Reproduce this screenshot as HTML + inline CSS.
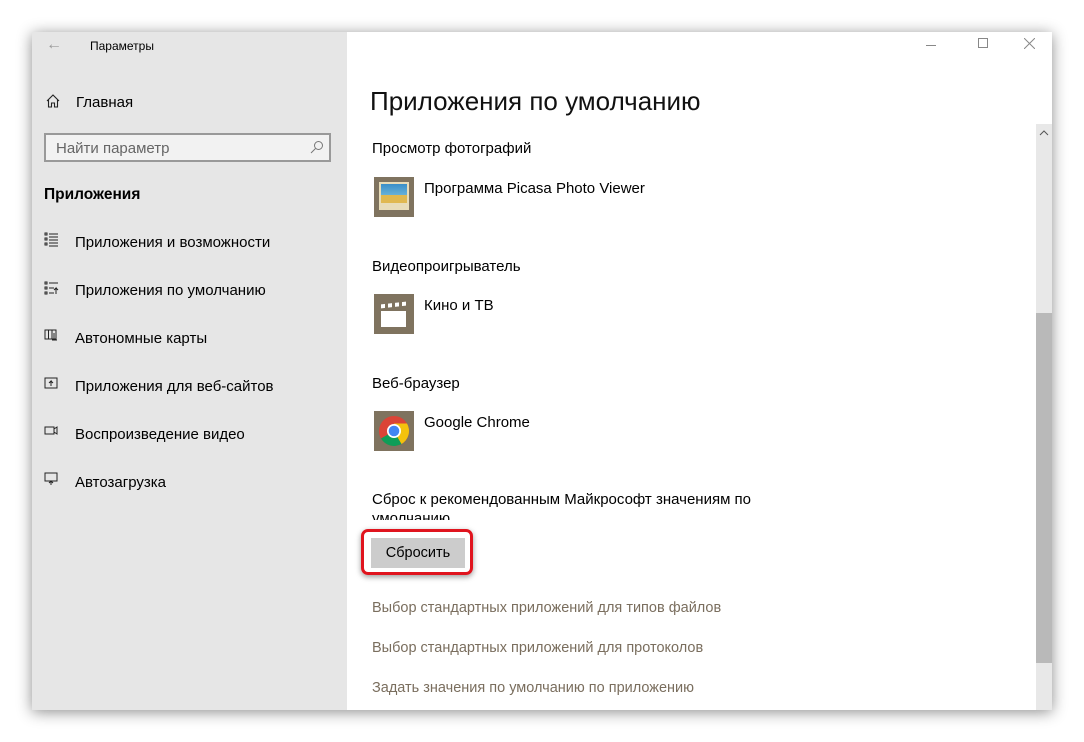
<!DOCTYPE html>
<html><head><meta charset="utf-8"><style>
*{margin:0;padding:0;box-sizing:border-box}
body{width:1084px;height:742px;background:#fff;position:relative;overflow:hidden;font-family:"Liberation Sans",sans-serif;color:#000}
.win{position:absolute;left:32px;top:32px;width:1020px;height:678px;background:#fff;box-shadow:0 2px 14px rgba(0,0,0,.45)}
.side{position:absolute;left:0;top:0;width:315px;height:678px;background:#e6e6e6}
.t{position:absolute;white-space:nowrap;margin-top:2px}
.s15{font-size:15px}
.link{color:#7a6e5e;font-size:14.5px}
.ic{position:absolute;width:40px;height:40px;background:#7f735f}
</style></head><body>
<div class="win">
<div class="side">
 <div class="t" style="left:14px;top:2px;font-size:16px;color:#999">&#8592;</div>
 <div class="t" style="left:58px;top:5px;font-size:12px">Параметры</div>
 <svg style="position:absolute;left:14px;top:62px" width="14" height="14" viewBox="0 0 14 14" fill="none" stroke="#222" stroke-width="1.1"><path d="M1 7 L7 1 L13 7 M2.5 5.5 V13 H5.5 V9 H8.5 V13 H11.5 V5.5"/></svg>
 <div class="t s15" style="left:44px;top:60px">Главная</div>
 <div style="position:absolute;left:12px;top:101px;width:287px;height:29px;border:2px solid #999;background:#f2f2f2"></div>
 <div class="t s15" style="left:24px;top:106px;color:#666">Найти параметр</div>
 <svg style="position:absolute;left:278px;top:108px" width="14" height="14" viewBox="0 0 14 14" fill="none" stroke="#777" stroke-width="1"><circle cx="8.5" cy="5.5" r="4"/><path d="M5.5 8.5 L1 13"/></svg>
 <div class="t" style="left:12px;top:152px;font-size:15.5px;font-weight:bold">Приложения</div>
 <div class="t s15" style="left:43px;top:200px">Приложения и возможности</div>
 <div class="t s15" style="left:43px;top:248px">Приложения по умолчанию</div>
 <div class="t s15" style="left:43px;top:296px">Автономные карты</div>
 <div class="t s15" style="left:43px;top:344px">Приложения для веб-сайтов</div>
 <div class="t s15" style="left:43px;top:392px">Воспроизведение видео</div>
 <div class="t s15" style="left:43px;top:440px">Автозагрузка</div>
 <svg style="position:absolute;left:12px;top:200px" width="20" height="300" viewBox="0 0 20 300" fill="none" stroke="#222" stroke-width="1">
  <path d="M1 1h2v2h-2zM1 6h2v2h-2zM1 11h2v2h-2zM5 2h9M5 5h9M5 8h9M5 11h9M5 14h9"/>
  <path d="M1 50h2v2h-2zM1 55h2v2h-2zM1 60h2v2h-2zM5 51h9M5 56h5M5 61h5M12 62v-6l-2 2M12 56l2 2"/>
  <path d="M1 98h11v9h-11zM4.5 98v9M8 98v9M10 101v7M8 108h5"/>
  <path d="M1 146h12v10h-12zM7 154v-5l-2 2M7 149l2 2"/>
  <path d="M1 195h9v7h-9zM10 197l3-2v7l-3-2"/>
  <path d="M1 241h12v8h-12zM7 253v-4M5 251l2-2 2 2"/>
 </svg>
</div>
<div style="position:absolute;left:894px;top:13px;width:10px;height:1px;background:#888"></div>
<div style="position:absolute;left:946px;top:6px;width:10px;height:10px;border:1px solid #888"></div>
<svg style="position:absolute;left:992px;top:6px" width="11" height="11" stroke="#888" stroke-width="1"><path d="M0 0L11 11M11 0L0 11"/></svg>
<div style="position:absolute;left:1004px;top:92px;width:16px;height:586px;background:#e8e8e8"></div>
<svg style="position:absolute;left:1007px;top:97px" width="10" height="8" fill="none" stroke="#555"><path d="M1 6L5 2L9 6"/></svg>
<div style="position:absolute;left:1004px;top:281px;width:16px;height:350px;background:#b9b9b9"></div>

<div class="t" style="left:338px;top:52px;font-size:26px;color:#111">Приложения по умолчанию</div>
<div class="t s15" style="left:340px;top:106px">Просмотр фотографий</div>
<div class="ic" style="left:342px;top:145px"><div style="position:absolute;left:5px;top:5px;width:30px;height:28px;background:#e8dcb8"></div><div style="position:absolute;left:7px;top:7px;width:26px;height:16px;background:linear-gradient(#3a8fc8,#7cc0e0)"></div><div style="position:absolute;left:7px;top:18px;width:26px;height:8px;background:#e0b850"></div></div>
<div class="t s15" style="left:392px;top:146px">Программа Picasa Photo Viewer</div>
<div class="t s15" style="left:340px;top:224px">Видеопроигрыватель</div>
<div class="ic" style="left:342px;top:262px"><div style="position:absolute;left:7px;top:17px;width:25px;height:16px;background:#fff"></div><div style="position:absolute;left:7px;top:9px;width:25px;height:4px;background:repeating-linear-gradient(90deg,#fff 0 4px,transparent 4px 7px);transform:skewY(-6deg)"></div></div>
<div class="t s15" style="left:392px;top:263px">Кино и ТВ</div>
<div class="t s15" style="left:340px;top:341px">Веб-браузер</div>
<div class="ic" style="left:342px;top:379px"><svg width="40" height="40" viewBox="0 0 40 40"><circle cx="20" cy="20" r="15" fill="#db4437"/><path d="M20 20 L7 27.5 A15 15 0 0 0 27.5 33 Z" fill="#0f9d58"/><path d="M20 20 L27.5 33 A15 15 0 0 0 33 12.5 L20 12.5Z" fill="#f4c20d"/><circle cx="20" cy="20" r="7" fill="#fff"/><circle cx="20" cy="20" r="5.3" fill="#4285f4"/></svg></div>
<div class="t s15" style="left:392px;top:380px">Google Chrome</div>
<div class="t s15" style="left:340px;top:457px">Сброс к рекомендованным Майкрософт значениям по</div>
<div style="position:absolute;left:340px;top:478px;height:10px;overflow:hidden;white-space:nowrap" class="s15">умолчанию</div>
<div style="position:absolute;left:329px;top:497px;width:112px;height:46px;border:3px solid #e0141e;border-radius:7px;box-shadow:0 2px 6px rgba(0,0,0,.4)"></div>
<div style="position:absolute;left:339px;top:506px;width:94px;height:30px;background:#ccc;font-size:14.5px;text-align:center;line-height:30px">Сбросить</div>
<div class="t link" style="left:340px;top:566px">Выбор стандартных приложений для типов файлов</div>
<div class="t link" style="left:340px;top:606px">Выбор стандартных приложений для протоколов</div>
<div class="t link" style="left:340px;top:646px">Задать значения по умолчанию по приложению</div>
</div>
</body></html>
